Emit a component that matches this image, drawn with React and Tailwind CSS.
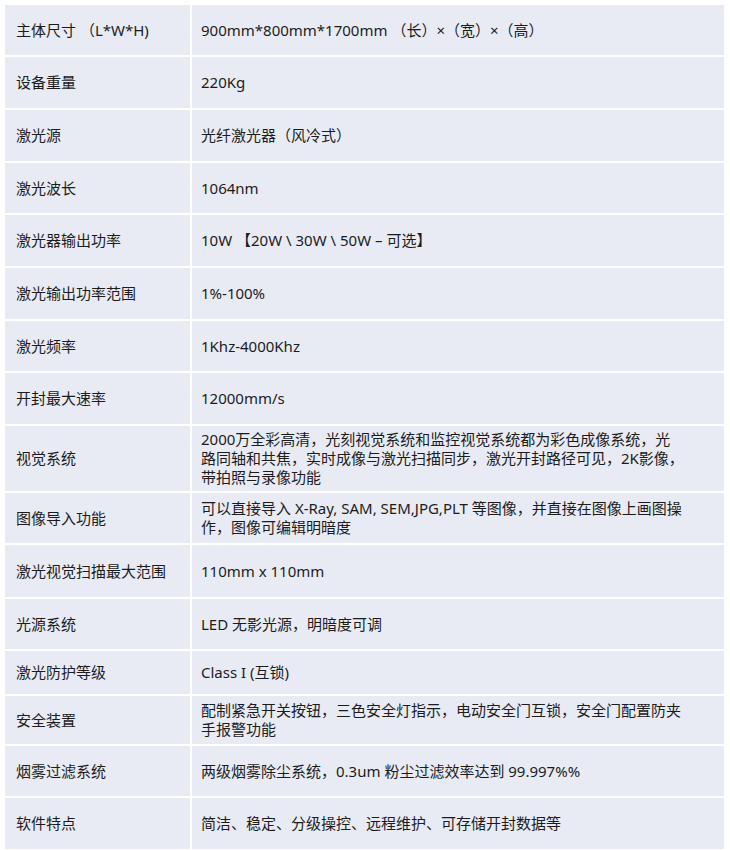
import React from "react";

const rows = [
  { k: "主体尺寸 （L*W*H)", v: ["900mm*800mm*1700mm （长）×（宽）×（高）"], h: "h-[50px]" },
  { k: "设备重量", v: ["220Kg"], h: "h-[51px]" },
  { k: "激光源", v: ["光纤激光器（风冷式）"], h: "h-[51px]" },
  { k: "激光波长", v: ["1064nm"], h: "h-[50px]" },
  { k: "激光器输出功率", v: ["10W 【20W \\ 30W \\ 50W – 可选】"], h: "h-[51px]" },
  { k: "激光输出功率范围", v: ["1%-100%"], h: "h-[51px]" },
  { k: "激光频率", v: ["1Khz-4000Khz"], h: "h-[50px]" },
  { k: "开封最大速率", v: ["12000mm/s"], h: "h-[51px]" },
  {
    k: "视觉系统",
    v: [
      "2000万全彩高清，光刻视觉系统和监控视觉系统都为彩色成像系统，光",
      "路同轴和共焦，实时成像与激光扫描同步，激光开封路径可见，2K影像，",
      "带拍照与录像功能",
    ],
    h: "h-[65px]",
  },
  {
    k: "图像导入功能",
    v: ["可以直接导入 X-Ray, SAM, SEM,JPG,PLT 等图像，并直接在图像上画图操", "作，图像可编辑明暗度"],
    h: "h-[50px]",
  },
  { k: "激光视觉扫描最大范围", v: ["110mm x 110mm"], h: "h-[52px]" },
  { k: "光源系统", v: ["LED 无影光源，明暗度可调"], h: "h-[50px]" },
  { k: "激光防护等级", v: ["Class I (互锁)"], h: "h-[43px]" },
  {
    k: "安全装置",
    v: ["配制紧急开关按钮，三色安全灯指示，电动安全门互锁，安全门配置防夹", "手报警功能"],
    h: "h-[48px]",
  },
  { k: "烟雾过滤系统", v: ["两级烟雾除尘系统，0.3um 粉尘过滤效率达到 99.997%%"], h: "h-[50px]" },
  { k: "软件特点", v: ["简洁、稳定、分级操控、远程维护、可存储开封数据等"], h: "h-[51px]" },
];

export default function App() {
  return (
    <div
      className="bg-white min-h-[850px] pt-[5px] pl-[5px]"
      style={{ fontFamily: '"Noto Sans", "Noto Sans CJK SC", sans-serif' }}
    >
      <div className="grid grid-cols-[185px_532px] gap-[2px] w-[719px] text-[15px] text-[#1c1c1c]">
        {rows.map((r, i) => (
          <React.Fragment key={i}>
            <div className={`${r.h} bg-[#e8ebf4] flex items-center pl-[11px] leading-[19px] whitespace-pre`}>{r.k}</div>
            <div className={`${r.h} bg-[#e8ebf4] flex items-center pl-[9px] leading-[19px]`}>
              <div className="whitespace-nowrap">
                {r.v.map((line, j) => (
                  <div key={j}>{line}</div>
                ))}
              </div>
            </div>
          </React.Fragment>
        ))}
      </div>
    </div>
  );
}
